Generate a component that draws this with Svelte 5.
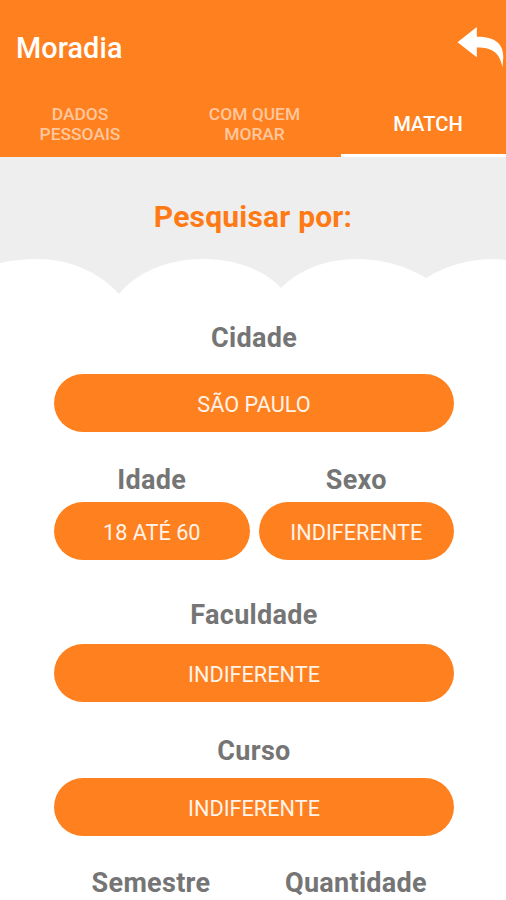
<script>
    let active = 2;

    const tabs = ['Dados pessoais', 'Com quem morar', 'Match'];

    const rows = [
        { name: 'city', fields: [{ label: 'Cidade', value: 'São Paulo' }] },
        { name: 'person', fields: [{ label: 'Idade', value: '18 até 60' }, { label: 'Sexo', value: 'Indiferente' }] },
        { name: 'college', fields: [{ label: 'Faculdade', value: 'Indiferente' }] },
        { name: 'course', fields: [{ label: 'Curso', value: 'Indiferente' }] },
        { name: 'term', fields: [{ label: 'Semestre' }, { label: 'Quantidade' }] }
    ];

    const select = index => () => {
        active = index;
    };
</script>

<div class="screen">
    <header>
        <h1>Moradia</h1>
        <button class="back" aria-label="Voltar">
            <svg width="50" height="46" viewBox="0 0 50 46">
                <path d="M1.5 18.2 20.8 3v9.700C38 12.500 47.300 19 47.300 33L46.500 43C43.500 29 37 23.500 20.800 23.500v9.800z"/>
            </svg>
        </button>
    </header>

    <nav>
        {#each tabs as tab, index}
            <button class="tab" class:active={active === index} on:click={select(index)}><span>{tab}</span></button>
        {/each}
    </nav>

    <section class="banner">
        <h2>Pesquisar por:</h2>
        <svg class="clouds" width="506" height="40" viewBox="0 0 506 40">
            <path d="M0 6Q18 2 38 2C68 2 98 14 119 37C137 15 167 2 204 2C235 2 265 13 281 31C299 13 325 2 358 2C386 2 409 11 426 21C447 8 470 2 495 2L506 3V40H0Z"/>
        </svg>
    </section>

    <main>
        {#each rows as { name, fields } (name)}
            <div class="row {name}">
                {#each fields as { label, value }}
                    <div class="field">
                        <span class="label">{label}</span>
                        {#if value}
                            <button class="pill">{value}</button>
                        {/if}
                    </div>
                {/each}
            </div>
        {/each}
    </main>
</div>

<style>
    :global(body) {
        margin: 0;
        background: #fff;
    }

    .screen {
        width: 506px;
        height: 900px;
        overflow: hidden;
        font-family: Roboto, sans-serif;
        background: #fff;
    }

    button {
        border: 0;
        margin: 0;
        padding: 0;
        font-family: inherit;
        cursor: pointer;
    }

    header {
        display: flex;
        justify-content: space-between;
        height: 93px;
        padding-left: 16px;
        background: #ff801e;
    }

    h1 {
        margin: 30px 0 0;
        font-size: 28.8px;
        line-height: 36px;
        font-weight: 500;
        letter-spacing: 0.1px;
        color: #fff;
    }

    .back {
        height: 46px;
        margin-top: 24px;
        background: none;
    }

    .back svg {
        display: block;
        fill: #fff;
    }

    nav {
        display: grid;
        grid-template-columns: 167px 174px 165px;
        height: 64px;
        background: #ff801e;
    }

    .tab {
        display: flex;
        align-items: center;
        justify-content: center;
        padding: 0 24px 3px 25px;
        font-size: 17.4px;
        line-height: 20px;
        font-weight: 500;
        text-transform: uppercase;
        color: #ffc79d;
        background: none;
    }

    .tab:nth-child(2) {
        padding: 0 31px 3px 32px;
    }

    .tab:first-child {
        padding: 0 31px 3px 24px;
    }

    .tab.active {
        padding: 0 0 0 9px;
        border-bottom: 3px solid #fff;
        font-size: 20.2px;
        color: #fff;
    }

    .tab.active:last-child {
        padding: 0 0 0 9px;
    }

    .banner {
        display: flex;
        flex-direction: column;
        justify-content: space-between;
        height: 140px;
        background: #eee;
    }

    h2 {
        margin: 42px 0 0;
        font-size: 30px;
        line-height: 36px;
        font-weight: 700;
        letter-spacing: 0.2px;
        text-align: center;
        color: #ff7a14;
    }

    .clouds {
        display: block;
        fill: #fff;
    }

    main {
        padding: 23px 52px 0 54px;
    }

    .row {
        display: flex;
        gap: 9px;
        margin-bottom: 30px;
    }

    .field {
        display: flex;
        flex: 1;
        flex-direction: column;
    }

    .label {
        height: 40px;
        font-size: 27px;
        line-height: 36px;
        font-weight: 700;
        letter-spacing: 0.3px;
        text-align: center;
        color: #757575;
    }

    .city .label {
        height: 54px;
    }

    .person {
        margin-bottom: 37px;
    }

    .college .label {
        height: 47px;
    }

    .college {
        margin-bottom: 31px;
    }

    .course .label {
        height: 45px;
    }

    .term {
        margin: -1px 0 0 -1px;
    }

    .pill {
        height: 58px;
        padding-top: 3px;
        border-radius: 29px;
        font-size: 21.7px;
        line-height: 28px;
        text-transform: uppercase;
        color: #fff3ea;
        background: #ff801e;
    }
</style>
